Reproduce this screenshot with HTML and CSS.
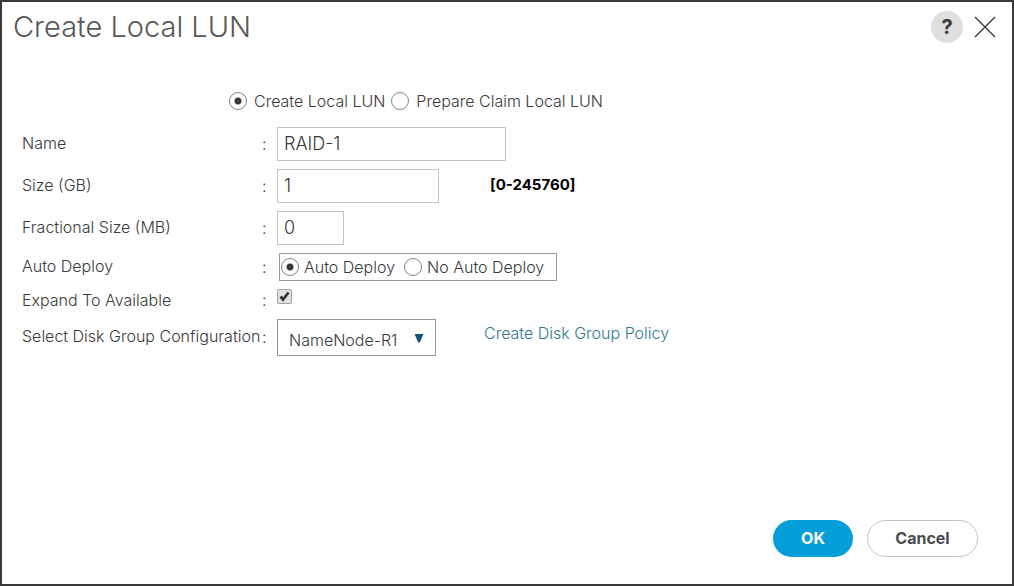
FILE: index.html
```
<!DOCTYPE html>
<html lang="en">
<head>
  <meta charset="UTF-8">
  <title>Create Local LUN</title>
  <link rel="stylesheet" href="styles.css">
</head>
<body>
<form class="dialog">
  <header class="dialog-header">
    <h1>Create Local LUN</h1>
    <button type="button" class="help" aria-label="Help">?</button>
    <button type="button" class="close" aria-label="Close">
      <svg width="22" height="22" viewBox="0 0 22 22"><path d="M1 1L21 21M21 1L1 21" fill="none" stroke="#39393b" stroke-width="1.4"/></svg>
    </button>
  </header>

  <main class="dialog-body">
    <div class="mode">
      <label><input type="radio" name="mode" checked> Create Local LUN</label>
      <label><input type="radio" name="mode"> Prepare Claim Local LUN</label>
    </div>

    <div class="row">
      <label class="caption" for="name">Name</label><span class="colon">:</span>
      <input type="text" id="name" class="wide" value="RAID-1">
    </div>
    <div class="row">
      <label class="caption" for="size">Size (GB)</label><span class="colon">:</span>
      <input type="text" id="size" class="medium" value="1">
      <b class="range">[0-245760]</b>
    </div>
    <div class="row">
      <label class="caption" for="fraction">Fractional Size (MB)</label><span class="colon">:</span>
      <input type="text" id="fraction" class="narrow" value="0">
    </div>
    <div class="row row-deploy">
      <span class="caption" id="deploy-label">Auto Deploy</span><span class="colon">:</span>
      <div class="deploy" role="radiogroup" aria-labelledby="deploy-label">
        <label><input type="radio" name="deploy" checked> Auto Deploy</label>
        <label><input type="radio" name="deploy"> No Auto Deploy</label>
      </div>
    </div>
    <div class="row row-expand">
      <label class="caption" for="expand">Expand To Available</label><span class="colon">:</span>
      <input type="checkbox" id="expand" checked>
    </div>
    <div class="row row-group">
      <label class="caption" for="group">Select Disk Group Configuration</label><span class="colon">:</span>
      <div class="select">
        <select id="group"><option>NameNode-R1</option></select>
        <svg class="arrow" width="10" height="9" viewBox="0 0 10 9"><path d="M0.5 0H9.5L5.8 8.5H4.2Z" fill="#13527c"/></svg>
      </div>
      <a href="#" class="policy">Create Disk Group Policy</a>
    </div>
  </main>

  <footer class="dialog-footer">
    <button type="submit" class="ok">OK</button>
    <button type="button" class="cancel">Cancel</button>
  </footer>
</form>
</body>
</html>
```
FILE: styles.css
```
* { box-sizing: border-box; }
body { margin: 0; background: #fff; color: #39393b; font: 300 16px/20px Inter, "Open Sans", sans-serif; }
button, input, select { font: inherit; color: inherit; }
button { padding: 0; cursor: pointer; }

.dialog { display: flex; flex-direction: column; min-height: 100vh; border: 2px solid #39393b; }

.dialog-header { display: flex; align-items: center; padding: 7px 16px 0 11px; }
.dialog-header h1 { flex: 1; margin: 0; font-size: 29px; line-height: 36px; font-weight: 300; color: #58585b; }
.help { width: 32px; height: 32px; border: 0; border-radius: 50%; background: #dfdfdf; font-size: 20px; font-weight: 700; }
.close { display: flex; margin-left: 11px; border: 0; background: none; }

.dialog-body { flex: 1; padding: 46px 20px 0; }
.mode { display: flex; gap: 6px; padding: 0 0 12px 207px; }
.mode label, .deploy label { display: flex; align-items: center; gap: 7px; white-space: nowrap; }

input[type="radio"] {
  appearance: none;
  flex: none;
  width: 18px;
  height: 18px;
  margin: 0;
  border: 1px solid #858587;
  border-radius: 50%;
  background: #fff;
}
input[type="radio"]:checked { background: radial-gradient(circle, #39393b 3px, transparent 4px); }

.row { display: flex; align-items: center; height: 42px; }
.caption { flex: none; width: 240px; padding-bottom: 2px; white-space: nowrap; }
.colon { flex: none; width: 15px; }

input[type="text"] { height: 34px; padding: 0 6px 2px; border: 1px solid #c4c4c4; background: #fff; font-size: 18px; }
.wide { width: 229px; }
.medium { width: 162px; }
.narrow { width: 67px; }
.range { margin-left: 51px; padding-bottom: 2px; color: #000; font-size: 15px; font-weight: 700; }

.row-deploy { height: 36px; }
.deploy { display: flex; gap: 9px; height: 28px; margin-left: 2px; padding: 0 12px 0 1px; border: 1px solid #98989a; }
.deploy label { gap: 5px; }

.row-expand { height: 30px; }
.row-expand .caption { padding-bottom: 0; }
input[type="checkbox"] {
  appearance: none;
  width: 15px;
  height: 15px;
  margin: 0 0 7px;
  border: 1px solid #a3a3a3;
  border-radius: 2px;
  background: #e2e2e2 url("data:image/svg+xml,%3Csvg xmlns='http://www.w3.org/2000/svg' viewBox='0 0 13 13'%3E%3Cpath d='M2.5 6.5L5 9.5L10.5 2.5' fill='none' stroke='%23333' stroke-width='2.8'/%3E%3C/svg%3E");
}

.row-group { height: 44px; }
.select { position: relative; }
.select select { appearance: none; display: block; width: 159px; height: 37px; padding: 5px 30px 0 11px; border: 1px solid #98989a; border-radius: 0; background: #fff; }
.arrow { position: absolute; right: 12px; top: 15px; pointer-events: none; }
.policy { margin-left: 48px; padding-bottom: 8px; color: #2f7896; text-decoration: none; }

.dialog-footer { display: flex; justify-content: flex-end; gap: 14px; padding: 0 34px 27px; }
.dialog-footer button { height: 37px; padding-bottom: 2px; border-radius: 19px; font-weight: 700; }
.ok { width: 80px; border: 0; background: #049fd9; color: #fff; }
.cancel { width: 111px; border: 1px solid #c4c4c4; background: #fff; color: #4b4b4e; }
```
